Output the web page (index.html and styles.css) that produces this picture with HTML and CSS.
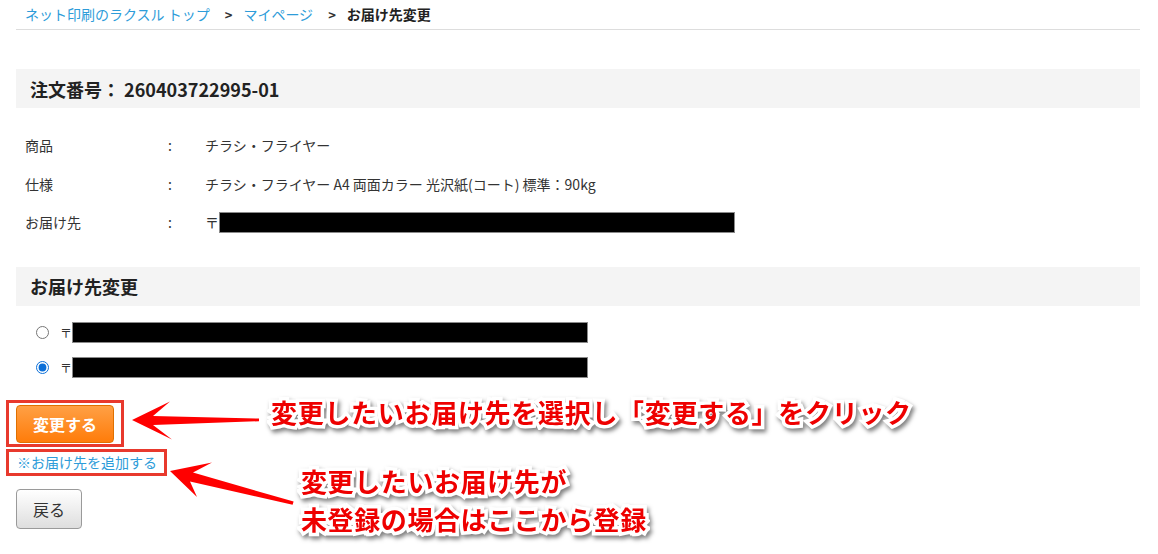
FILE: index.html
```html
<!DOCTYPE html>
<html lang="ja">
<head>
<meta charset="utf-8">
<title>お届け先変更</title>
<link rel="stylesheet" href="styles.css">
</head>
<body>
<div class="page">
  <nav class="crumbs">
    <a class="crumb-link" href="#">ネット印刷のラクスル トップ</a>
    <span class="sep">&gt;</span>
    <a class="crumb-link" href="#">マイページ</a>
    <span class="sep">&gt;</span>
    <span class="crumb-current">お届け先変更</span>
  </nav>

  <h2 class="box-head head-order">注文番号：&nbsp;260403722995-01</h2>

  <div class="info">
    <div class="info-row"><span class="info-label">商品</span><span class="info-colon">:</span><span class="info-value">チラシ・フライヤー</span></div>
    <div class="info-row"><span class="info-label">仕様</span><span class="info-colon">:</span><span class="info-value">チラシ・フライヤー A4 両面カラー 光沢紙(コート) 標準：90kg</span></div>
    <div class="info-row"><span class="info-label">お届け先</span><span class="info-colon">:</span><span class="info-value"><span class="zip">〒</span><span class="redact redact-wide"></span></span></div>
  </div>

  <h2 class="box-head head-change">お届け先変更</h2>

  <div class="choices">
    <label class="choice"><input type="radio" name="addr" class="radio"><span class="zip zip-sm">〒</span><span class="redact"></span></label>
    <label class="choice"><input type="radio" name="addr" class="radio" checked><span class="zip zip-sm">〒</span><span class="redact"></span></label>
  </div>

  <div class="actions">
    <div class="hl hl-btn"><button class="btn-submit" type="button">変更する</button></div>
    <div class="hl hl-link"><a class="add-link" href="#">※お届け先を追加する</a></div>
    <button class="btn-back" type="button">戻る</button>
  </div>

  <svg class="arrows" width="1158" height="554" viewBox="0 0 1158 554" aria-hidden="true">
    <polygon fill="#ff0000" points="132,420 170,401.5 153,416 259,418.6 259,421.2 153,425 172,439.5"/>
    <polygon fill="#ff0000" points="170,471 212,462.5 193,472.5 293.6,501.6 292.6,504.8 190,481.5 197,497"/>
  </svg>

  <p class="note note-1">変更したいお届け先を選択し「変更する」をクリック</p>
  <p class="note note-2">変更したいお届け先が<br>未登録の場合はここから登録</p>
</div>
</body>
</html>
```

FILE: styles.css
```css
html, body {
  margin: 0;
  padding: 0;
  background: #ffffff;
}

body {
  font-family: "Noto Sans CJK JP", "Noto Sans", "Liberation Sans", sans-serif;
  color: #333333;
}

.page {
  position: relative;
  width: 1124px;
  height: 554px;
  margin-left: 16px;
  overflow: visible;
}

/* breadcrumbs */
.crumbs {
  height: 29px;
  line-height: 29px;
  padding-left: 9px;
  border-bottom: 1px solid #dddddd;
  font-size: 14px;
  display: flex;
  align-items: center;
  white-space: nowrap;
}

.crumb-link {
  color: #2d9cd9;
  text-decoration: none;
}

.sep {
  font-weight: 700;
  color: #333333;
  font-size: 13px;
  margin: 0 11px 0 15px;
}

.crumb-current {
  font-weight: 700;
  color: #222222;
}

/* grey headings */
.box-head {
  margin: 0;
  height: 39px;
  display: flex;
  align-items: center;
  padding-left: 14px;
  background: #f4f4f4;
  font-size: 18px;
  font-weight: 700;
  color: #222222;
}

.head-order {
  margin-top: 39px;
}

.head-change {
  margin-top: 25px;
}

/* info table */
.info {
  margin-top: 18px;
  font-size: 14px;
  color: #333333;
}

.info-row {
  height: 38.5px;
  display: flex;
  align-items: center;
}

.info-label {
  width: 143px;
  padding-left: 9px;
}

.info-colon {
  width: 37px;
}

.info-value {
  display: flex;
  align-items: center;
}

.zip {
  font-size: 14px;
  width: 14px;
}

.zip-sm {
  font-size: 12px;
  width: 12px;
  margin-left: 11px;
}

.redact {
  display: inline-block;
  width: 514px;
  height: 19px;
  background: #000000;
  border: 1px solid #8a8a8a;
}

.redact-wide {
  width: 514px;
}

/* radio choices */
.choices {
  margin-top: 9.5px;
}

.choice {
  height: 35px;
  display: flex;
  align-items: center;
  padding-left: 20px;
}

.radio {
  width: 13px;
  height: 13px;
  margin: 0;
  accent-color: #0b6fd8;
}

/* actions */
.actions {
  margin-top: 15px;
  display: flex;
  flex-direction: column;
  align-items: flex-start;
}

.hl {
  border: 3px solid #e8392d;
}

.hl-btn {
  margin-left: -10px;
  padding: 2px 7px 1px 7px;
}

.btn-submit {
  display: block;
  width: 98px;
  height: 38px;
  border: 1px solid #e07000;
  border-radius: 4px;
  background: linear-gradient(#ffa045, #ff7c0a);
  color: #ffffff;
  font-family: inherit;
  font-size: 16px;
  font-weight: 700;
  padding: 0;
  margin: 0;
}

.hl-link {
  margin-left: -10px;
  margin-top: 2px;
  padding: 0 7px 0 8px;
  height: 21px;
  display: flex;
  align-items: center;
}

.add-link {
  font-size: 14px;
  color: #2d9cd9;
  text-decoration: none;
  line-height: 21px;
}

.btn-back {
  margin-top: 13px;
  width: 66px;
  height: 40px;
  border: 1px solid #9a9a9a;
  border-radius: 4px;
  background: linear-gradient(#ffffff, #dedede);
  color: #333333;
  font-family: inherit;
  font-size: 16px;
  padding: 0;
}

/* annotations */
.arrows {
  position: absolute;
  left: -16px;
  top: 0;
  pointer-events: none;
}

.note {
  position: absolute;
  margin: 0;
  font-size: 26px;
  font-weight: 700;
  color: #ee0000;
  white-space: nowrap;
  -webkit-text-stroke: 7px #ffffff;
  paint-order: stroke fill;
  filter: drop-shadow(2px 3px 2px rgba(0, 0, 0, 0.5));
}

.note-1 {
  left: 255px;
  top: 396px;
  line-height: 31px;
  letter-spacing: 0.7px;
}

.note-2 {
  left: 285px;
  top: 462px;
  line-height: 38px;
  letter-spacing: 0.6px;
}
```
